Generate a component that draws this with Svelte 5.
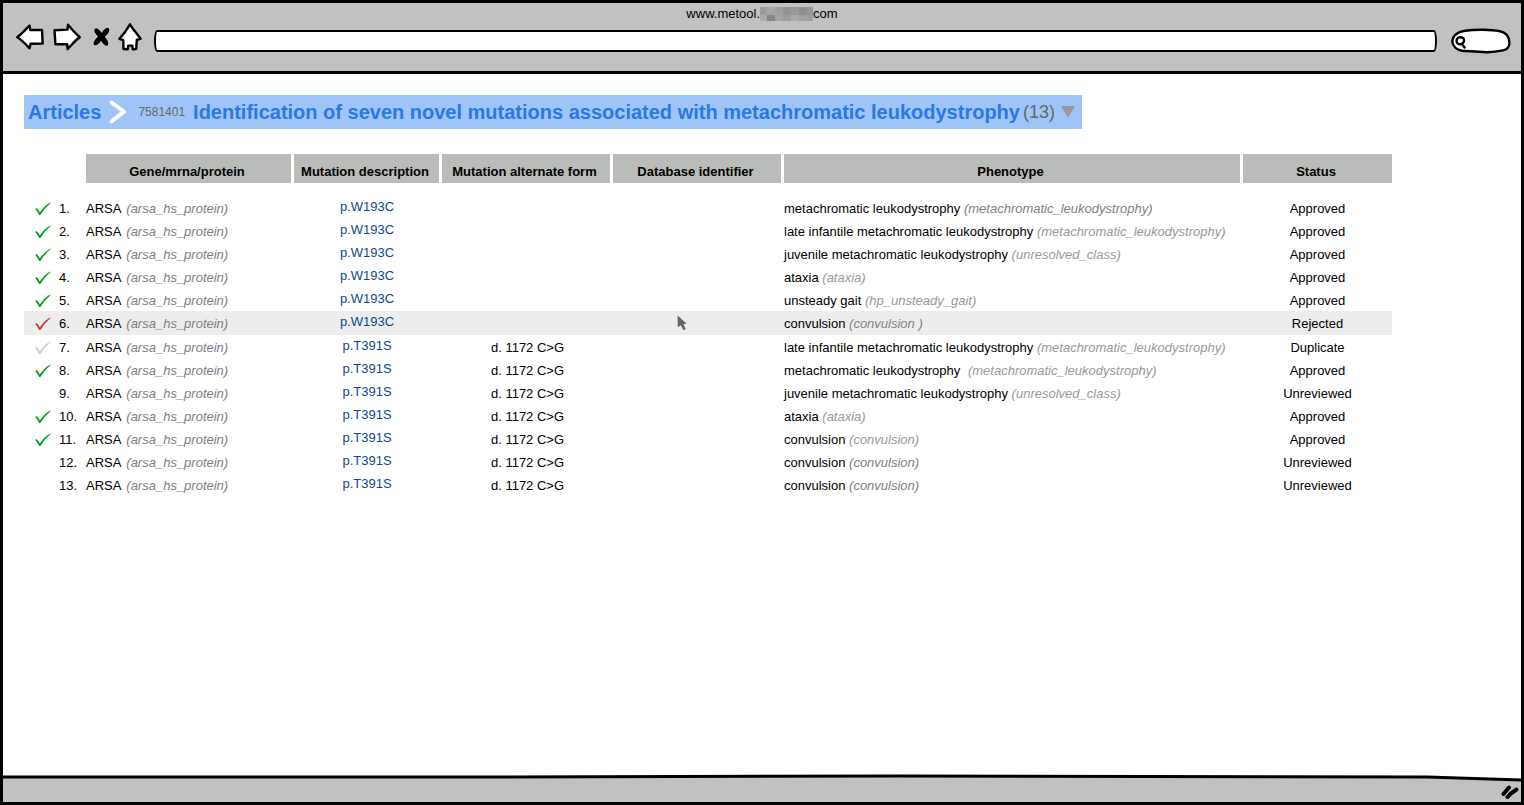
<script>
  const columns = [
    'Gene/mrna/protein',
    'Mutation description',
    'Mutation alternate form',
    'Database identifier',
    'Phenotype',
    'Status'
  ];

  const gene = 'ARSA';
  const geneId = '(arsa_hs_protein)';

  const rows = [
    { mark: 'green', mutation: 'p.W193C', form: '', name: 'metachromatic leukodystrophy', cls: '(metachromatic_leukodystrophy)', strong: true, status: 'Approved' },
    { mark: 'green', mutation: 'p.W193C', form: '', name: 'late infantile metachromatic leukodystrophy', cls: '(metachromatic_leukodystrophy)', status: 'Approved' },
    { mark: 'green', mutation: 'p.W193C', form: '', name: 'juvenile metachromatic leukodystrophy', cls: '(unresolved_class)', status: 'Approved' },
    { mark: 'green', mutation: 'p.W193C', form: '', name: 'ataxia', cls: '(ataxia)', status: 'Approved' },
    { mark: 'green', mutation: 'p.W193C', form: '', name: 'unsteady gait', cls: '(hp_unsteady_gait)', status: 'Approved' },
    { mark: 'red', mutation: 'p.W193C', form: '', name: 'convulsion', cls: '(convulsion )', status: 'Rejected', active: true },
    { mark: 'faint', mutation: 'p.T391S', form: 'd. 1172 C>G', name: 'late infantile metachromatic leukodystrophy', cls: '(metachromatic_leukodystrophy)', status: 'Duplicate' },
    { mark: 'green', mutation: 'p.T391S', form: 'd. 1172 C>G', name: 'metachromatic leukodystrophy', cls: '(metachromatic_leukodystrophy)', wide: true, status: 'Approved' },
    { mark: '', mutation: 'p.T391S', form: 'd. 1172 C>G', name: 'juvenile metachromatic leukodystrophy', cls: '(unresolved_class)', status: 'Unreviewed' },
    { mark: 'green', mutation: 'p.T391S', form: 'd. 1172 C>G', name: 'ataxia', cls: '(ataxia)', status: 'Approved' },
    { mark: 'green', mutation: 'p.T391S', form: 'd. 1172 C>G', name: 'convulsion', cls: '(convulsion)', status: 'Approved' },
    { mark: '', mutation: 'p.T391S', form: 'd. 1172 C>G', name: 'convulsion', cls: '(convulsion)', strong: true, status: 'Unreviewed' },
    { mark: '', mutation: 'p.T391S', form: 'd. 1172 C>G', name: 'convulsion', cls: '(convulsion)', strong: true, status: 'Unreviewed' }
  ];

  // Shades of the pixelated part of the host name, two rows of seven blocks.
  const mosaic = [
    '#9b9b9b', '#a6a6a6', '#9f9f9f', '#949494', '#989898', '#8f8f8f', '#969696',
    '#a9a9a9', '#868686', '#a3a3a3', '#9c9c9c', '#a8a8a8', '#a0a0a0', '#9d9d9d'
  ];
</script>

<div class="browser">
  <header class="chrome">
    <div class="host">
      <span>www.metool.</span>
      <svg class="mosaic" width="53" height="14" viewBox="0 0 53 14" aria-hidden="true" shape-rendering="crispEdges">
        {#each mosaic as shade, i}
          <rect x={(i % 7) * 8 - 1} y={Math.floor(i / 7) * 8} width="8" height="8" fill={shade} />
        {/each}
      </svg>
      <span>com</span>
    </div>

    <div class="toolbar">
      <div class="nav">
        <button type="button" aria-label="Back">
          <svg width="28" height="26" viewBox="0 0 28 26"><path d="M1.3 13.2 C5.5 10 9.5 5.5 13.5 1.5 L14.3 6 L26 6 L26.7 19.5 L14.6 19.7 L13.5 24.3 C9.5 20 6 16 1.3 13.2Z" /></svg>
        </button>
        <button type="button" aria-label="Forward">
          <svg width="28" height="28" viewBox="0 0 28 28"><path d="M1.5 7.2 L14.5 6.6 L15 1.8 C18.5 6 22.5 10.5 26.7 14.2 C22 17.5 18.5 22 14.6 26.2 L14.2 21.3 L2.4 21.2Z" /></svg>
        </button>
        <button class="stop" type="button" aria-label="Stop">
          <svg width="17" height="20" viewBox="0 0 17 20"><path class="solid" d="M1.6 2 C3.4 -0.4 6.6 2.6 8.8 6 C10.6 2.4 14 -0.4 15.9 1.4 C17.4 3.4 14.6 7.6 11.8 9.8 C14.4 12.8 16.4 16.6 14.6 18.4 C12.4 20 9.8 16.4 8 13.8 C6 16.8 2.6 19.6 0.9 17.8 C-0.3 15.4 2.4 12.4 5 9.6 C2.8 7.4 0.6 4.6 1.6 2Z" /></svg>
        </button>
        <button type="button" aria-label="Home">
          <svg width="24" height="28" viewBox="0 0 24 28"><path d="M12 1.3 C15 6.5 19 10.5 22.6 15.6 L18.8 17 L18.2 26 L14.6 26.2 L14.4 22.6 L10.2 22.6 L9.8 26.2 L5.5 26 L5.2 17.2 L1.3 15.8 C5.5 11.5 9 6.5 12 1.3Z" /></svg>
        </button>
      </div>
      <input class="address" type="text" aria-label="Address" />
      <label class="search">
        <svg width="60" height="26" viewBox="0 0 60 26" aria-hidden="true">
          <path d="M11 22.8 C6 21.8 1.6 18.5 1.4 13.5 C1.4 7.5 7 3.6 14 2.8 C24 1.2 40 1.4 49 3.2 C55.5 4.6 58.6 9 58.4 15.5 C58.2 19.5 56.5 21.4 52 22.4 C44 24.2 36 24.6 28 23.8 C22 23.2 16 23.4 11 22.8Z" />
          <path d="M9.5 9.2 C12.2 9.2 13.4 11 13 13 C12.6 15.6 10 16.8 7.6 16 C5.4 15.2 5.2 12.4 6 10.8 C6.6 9.8 7.8 9.2 9.5 9.2 M11 16 L13.6 19.4" />
        </svg>
        <input type="search" aria-label="Search" />
      </label>
    </div>
  </header>

  <main>
    <nav class="crumbs" aria-label="Breadcrumb">
      <a class="crumb" href="#articles">Articles</a>
      <svg class="chevron" width="18" height="24" viewBox="0 0 18 24" aria-hidden="true"><path d="M2.5 2.5 L15 11.6 L2.5 21.5" /></svg>
      <span class="pmid">7581401</span>
      <h1>Identification of seven novel mutations associated with metachromatic leukodystrophy</h1>
      <span class="count">(13)</span>
      <button type="button" aria-label="Choose article">
        <svg width="16" height="12" viewBox="0 0 16 12"><path d="M1 0 H15 L8 12Z" /></svg>
      </button>
    </nav>

    <table>
      <colgroup>
        <col class="c-mark" />
        <col class="c-num" />
        <col class="c-gene" />
        <col class="c-mutation" />
        <col class="c-form" />
        <col class="c-form" />
        <col />
        <col class="c-status" />
      </colgroup>
      <thead>
        <tr>
          <td></td>
          <td></td>
          {#each columns as column}
            <th scope="col">{column}</th>
          {/each}
        </tr>
      </thead>
      <tbody>
        {#each rows as row, i}
          <tr class:active={row.active}>
            <td class="mark">
              {#if row.mark}
                <svg class={row.mark} width="16" height="14" viewBox="0 0 16 14" role="img" aria-label={row.status}>
                  <path d="M0.3 7 L1.5 6 Q3.2 7.4 4.8 10.4 Q9.4 3.6 15.2 0.4 L15.6 1 Q9.6 6 5.4 13 L4.2 13 Q2.4 9.6 0.3 7Z" />
                </svg>
              {/if}
            </td>
            <td>{i + 1}.</td>
            <td>{gene} <i class="gene-id">{geneId}</i></td>
            <td class="mutation"><a href="#{row.mutation}">{row.mutation}</a></td>
            <td class="center">{row.form}</td>
            <td class="center">
              {#if row.active}
                <svg class="pointer" width="10" height="16" viewBox="0 0 10 16" aria-hidden="true"><path d="M0.5 0.5 L9.5 8.6 L6.4 9.2 L8.8 14 L6.2 15.2 L4 10.4 L0.8 12Z" /></svg>
              {/if}
            </td>
            <td>{row.name} <i class:strong={row.strong} class:wide={row.wide} class:cool={row.active}>{row.cls}</i></td>
            <td class="center">{row.status}</td>
          </tr>
        {/each}
      </tbody>
    </table>
  </main>

  <footer>
    <svg class="rule" viewBox="0 0 1524 8" preserveAspectRatio="none" aria-hidden="true">
      <path class="page" d="M0 0 H1524 V5 L1430 3 L900 2 L0 3Z" />
      <path class="line" d="M0 3 L500 3 L900 2 L1430 3 L1524 6" />
    </svg>
    <svg class="grip" width="18" height="14" viewBox="0 0 18 14" aria-hidden="true">
      <path d="M2.5 9 L8 2.5 M6.5 12 Q10 8 15.5 4.5" />
    </svg>
  </footer>
</div>

<style>
  :global(body) {
    margin: 0;
    background: #fff;
  }

  .browser {
    box-sizing: border-box;
    min-height: 100vh;
    display: flex;
    flex-direction: column;
    border: 3px solid #000;
    font-family: "Liberation Sans", Arial, sans-serif;
    font-size: 13px;
    line-height: 16px;
    color: #000;
  }

  button {
    display: flex;
    padding: 0;
    border: 0;
    background: none;
  }

  .chrome {
    background: #c1c1c1;
    border-bottom: 3px solid #000;
    padding: 3px 10px 16px 13px;
  }

  .host {
    display: flex;
    justify-content: center;
    align-items: center;
    padding-right: 3px;
  }

  .toolbar {
    display: flex;
    align-items: center;
    gap: 12px;
    padding-top: 1px;
  }

  .nav {
    display: flex;
    align-items: center;
    gap: 9px;
    padding-bottom: 4px;
  }

  .stop {
    margin: 0 -1px 0 3px;
  }

  .nav path,
  .search path {
    fill: #fff;
    stroke: #000;
    stroke-width: 2.4;
    stroke-linejoin: round;
    stroke-linecap: round;
  }

  .nav .solid {
    fill: #000;
    stroke: none;
  }

  .address {
    box-sizing: border-box;
    flex: 1;
    min-width: 0;
    height: 22px;
    margin: 4px 2px 0 0;
    border: 2px solid #000;
    border-radius: 3px / 11px;
    background: #fff;
  }

  .search {
    display: grid;
    margin-top: 3px;
  }

  .search svg,
  .search input {
    grid-area: 1 / 1;
  }

  .search input {
    width: 36px;
    height: 16px;
    padding: 0;
    border: 0;
    background: none;
    align-self: center;
    justify-self: end;
    margin-right: 6px;
  }

  main {
    flex: 1;
    padding: 21px 129px 24px 21px;
  }

  .crumbs {
    display: inline-flex;
    align-items: center;
    min-height: 34px;
    padding: 0 6px 0 4px;
    background: #9fc4f8;
    color: #666;
  }

  .crumb,
  h1 {
    margin: 0;
    font-size: 20px;
    line-height: 24px;
    font-weight: bold;
    color: #2b78e4;
    text-decoration: none;
  }

  .chevron {
    margin: 0 11px 0 8px;
  }

  .chevron path {
    fill: none;
    stroke: #fff;
    stroke-width: 4;
    stroke-linecap: round;
    stroke-linejoin: round;
  }

  .pmid {
    font-size: 12px;
    margin-right: 8px;
  }

  .count {
    font-size: 18px;
    margin: 0 5px 0 3px;
  }

  .crumbs button path {
    fill: #999;
  }

  table {
    width: 100%;
    margin-top: 25px;
    table-layout: fixed;
    border-collapse: separate;
    border-spacing: 0;
  }

  .c-mark {
    width: 35px;
  }

  .c-num {
    width: 27px;
  }

  .c-gene {
    width: 208px;
  }

  .c-mutation {
    width: 148px;
  }

  .c-form {
    width: 171px;
  }

  .c-status {
    width: 149px;
  }

  th {
    padding: 10px 3px 3px 0;
    background: #babcb9;
    border-right: 3px solid #fff;
  }

  th:last-child {
    border-right: 0;
  }

  tbody::before {
    content: "";
    display: block;
    height: 13px;
  }

  td {
    box-sizing: border-box;
    height: 23px;
    padding: 2px 0 0;
    white-space: nowrap;
    vertical-align: middle;
  }

  .active td {
    height: 24px;
    background: #ededed;
  }

  .mark svg {
    display: block;
    margin-left: 11px;
    fill: #0a9b1b;
  }

  .mark .red {
    fill: #d1322d;
  }

  .mark .faint {
    fill: #ccc;
  }

  i {
    color: #999;
  }

  .gene-id {
    margin-left: 2px;
    color: #7e7e86;
  }

  .strong {
    color: #808080;
  }

  .wide {
    margin-left: 4px;
  }

  .cool {
    color: #83838b;
  }

  .center,
  .mutation {
    text-align: center;
  }

  .mutation {
    padding: 0 2px 2px 0;
  }

  .mutation a {
    color: #10478c;
    text-decoration: none;
  }

  .pointer {
    display: block;
    margin: 0 auto;
    padding: 0 34px 2px 0;
    fill: #666;
  }

  footer {
    background: #c1c1c1;
    display: flex;
    flex-direction: column;
    align-items: flex-end;
  }

  .rule {
    display: block;
    width: 100%;
    height: 8px;
  }

  .page {
    fill: #fff;
  }

  .line {
    fill: none;
    stroke: #000;
    stroke-width: 3;
  }

  .grip {
    margin: 3px 2px 3px 0;
  }

  .grip path {
    fill: none;
    stroke: #000;
    stroke-width: 4;
    stroke-linecap: round;
  }
</style>
